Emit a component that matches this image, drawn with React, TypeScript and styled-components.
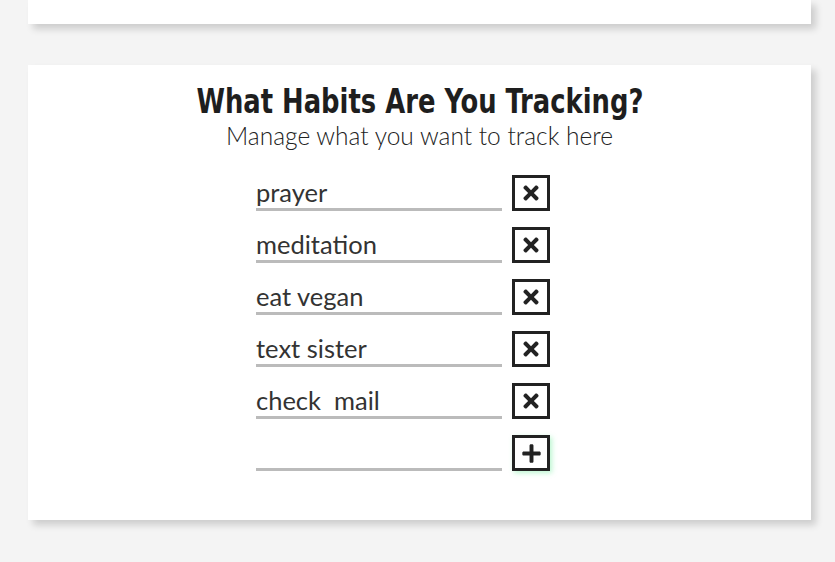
import React, { useState } from "react";
import styled, { createGlobalStyle } from "styled-components";
import { FaTimes, FaPlus } from "react-icons/fa";

const GlobalStyle = createGlobalStyle`
  html, body {
    margin: 0;
    padding: 0;
    background: #f4f4f4;
  }
`;

export const Page = styled.div`
  width: 835px;
  height: 562px;
  overflow: hidden;
  padding: 0 24px 0 28px;
  box-sizing: border-box;
`;

export const Card = styled.div<{ $height: number; $top?: number }>`
  background: #fff;
  height: ${(p) => p.$height}px;
  margin-top: ${(p) => p.$top || 0}px;
  box-shadow: 5px 5px 7px rgba(0, 0, 0, 0.16);
  display: flex;
  flex-flow: column nowrap;
  align-items: center;
  box-sizing: border-box;
`;

export const Title = styled.h2`
  margin: 17px 0 0;
  font-family: "DejaVu Sans Condensed", "DejaVu Sans", sans-serif;
  font-stretch: condensed;
  font-weight: 700;
  font-size: 33px;
  line-height: 40px;
  color: #1e1e1e;
  transform: scaleX(0.87);
`;

export const Subtitle = styled.p`
  margin: 0;
  font-family: Lato, "Noto Sans", sans-serif;
  font-weight: 300;
  font-size: 24.5px;
  line-height: 28px;
  color: #222;
`;

export const List = styled.div`
  align-self: flex-start;
  margin: 25px 0 0 228px;
  display: flex;
  flex-flow: column nowrap;
  gap: 16px;
`;

export const Row = styled.div`
  display: flex;
  flex-flow: row nowrap;
  align-items: flex-end;
  gap: 10px;
`;

export const Field = styled.input`
  width: 246px;
  height: 36px;
  box-sizing: border-box;
  border: none;
  border-bottom: 3px solid #bbb;
  outline: none;
  padding: 0;
  background: transparent;
  font-family: Lato, "Noto Sans", sans-serif;
  font-weight: 400;
  font-size: 25.5px;
  color: #333;
`;

export const IconButton = styled.button<{ $glow?: boolean }>`
  width: 38px;
  height: 36px;
  box-sizing: border-box;
  border: 3px solid #222;
  background: #fff;
  color: #222;
  padding: 0;
  display: flex;
  justify-content: center;
  align-items: center;
  box-shadow: ${(p) => (p.$glow ? "2px 2px 5px rgba(60, 230, 120, 0.35)" : "none")};
  svg {
    width: ${(p) => (p.$glow ? 21 : 22)}px;
    height: ${(p) => (p.$glow ? 21 : 22)}px;
  }
`;

const initial = ["prayer", "meditation", "eat vegan", "text sister", "check  mail"];

export default function App() {
  const [habits] = useState(initial);
  return (
    <>
      <GlobalStyle />
      <Page>
        <Card $height={24} />
        <Card $height={455} $top={41}>
          <Title>What Habits Are You Tracking?</Title>
          <Subtitle>Manage what you want to track here</Subtitle>
          <List>
            {habits.map((h) => (
              <Row key={h}>
                <Field defaultValue={h} />
                <IconButton>
                  <FaTimes />
                </IconButton>
              </Row>
            ))}
            <Row>
              <Field defaultValue="" />
              <IconButton $glow>
                <FaPlus />
              </IconButton>
            </Row>
          </List>
        </Card>
      </Page>
    </>
  );
}
